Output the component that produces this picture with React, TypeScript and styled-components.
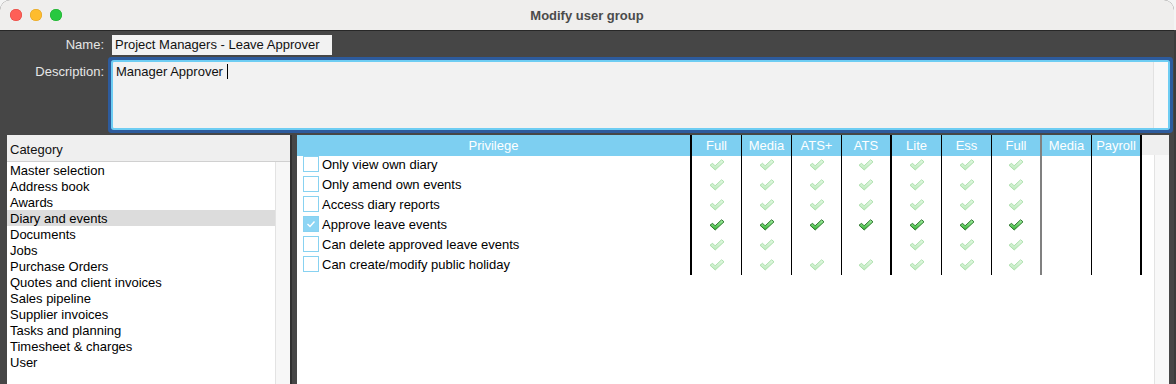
import React from 'react';
import styled, { createGlobalStyle } from 'styled-components';

const GlobalStyle = createGlobalStyle`
  html, body { margin: 0; padding: 0; }
  body {
    width: 1176px;
    height: 384px;
    overflow: hidden;
    background: linear-gradient(#f4f4f4 0 30px, #3c3c3c 30px);
    font-family: "Liberation Sans", Arial, sans-serif;
    font-size: 13px;
  }
`;

const Window = styled.div`
  width: 1174px;
  height: 384px;
  display: flex;
  flex-direction: column;
  border-radius: 10px 10px 0 0;
  overflow: hidden;
  background: #464646;
`;

const TitleBar = styled.div`
  height: 30px;
  flex-shrink: 0;
  background: #efeeed;
  border-bottom: 1px solid #272727;
  display: grid;
  grid-template-columns: 1fr auto 1fr;
  align-items: center;
`;

const Lights = styled.div`
  display: flex;
  gap: 8px;
  padding-left: 10px;
`;

const Light = styled.span<{ $c: string; $b: string }>`
  width: 12px;
  height: 12px;
  border-radius: 50%;
  background: ${(p) => p.$c};
  box-shadow: inset 0 0 0 0.5px ${(p) => p.$b};
`;

const Title = styled.div`
  font-weight: bold;
  font-size: 13px;
  color: #4b4b4b;
`;

const Form = styled.div`
  padding: 4px 0 0 0;
  display: grid;
  grid-template-columns: 104px 1fr;
  column-gap: 8px;
  row-gap: 7px;
`;

const Label = styled.div`
  color: #e6e6e6;
  text-align: right;
  line-height: 20px;
  font-size: 13px;
`;

const NameInput = styled.div`
  width: 217px;
  height: 20px;
  line-height: 20px;
  padding-left: 3px;
  background: #f2f2f2;
  color: #111;
  font-size: 13px;
`;

const TextArea = styled.div`
  margin-left: 1px;
  margin-right: 6px;
  height: 66px;
  background: #f2f2f2;
  border-radius: 1px;
  box-shadow: 0 0 0 2px #6ecdf3, 0 0 0 5px #2d5b9d;
  display: flex;
`;

const TextContent = styled.div`
  flex: 1;
  padding: 2px 3px;
  color: #111;
  line-height: 16px;
  font-size: 13px;
`;

const Caret = styled.span`
  display: inline-block;
  width: 1px;
  height: 15px;
  margin-left: 4px;
  vertical-align: -3px;
  background: #000;
`;

const TextTrack = styled.div`
  width: 14px;
  background: #f8f8f8;
  border-left: 1px solid #e2e2e2;
`;

const Lower = styled.div`
  flex: 1;
  min-height: 0;
  display: flex;
  gap: 5px;
  padding: 7px 5px 0 7px;
`;

const LeftPanel = styled.div`
  width: 285px;
  flex-shrink: 0;
  display: flex;
  flex-direction: column;
  background: #fff;
  border-right: 2px solid #303030;
  box-sizing: border-box;
`;

const CatHeader = styled.div`
  height: 26px;
  line-height: 29px;
  padding-left: 3px;
  background: #efefef;
  border-bottom: 1px solid #d0d0d0;
  color: #111;
  font-size: 13px;
  flex-shrink: 0;
`;

const ListBody = styled.div`
  flex: 1;
  display: flex;
`;

const List = styled.div`
  flex: 1;
  display: flex;
  flex-direction: column;
`;

const ListItem = styled.div<{ $sel?: boolean }>`
  height: 16px;
  line-height: 18px;
  padding-left: 3px;
  color: #000;
  font-size: 13px;
  background: ${(p) => (p.$sel ? '#dcdcdc' : 'transparent')};
`;

const Track = styled.div`
  width: 14px;
  background: #f7f7f7;
  border-left: 1px solid #e3e3e3;
`;

const RightPanel = styled.div`
  flex: 1;
  display: flex;
  flex-direction: column;
  background: #fff;
`;

const HeaderBar = styled.div`
  height: 20px;
  flex-shrink: 0;
  background: #efefef;
  display: flex;
`;

const Grid = styled.div`
  display: grid;
  grid-template-columns: 395px repeat(9, 50px);
  height: 20px;
`;

const HeadCell = styled.div<{ $border: string }>`
  background: #7dcff1;
  color: #fff;
  text-align: center;
  line-height: 21px;
  font-size: 13px;
  border-right: ${(p) => p.$border};
`;

const TableBody = styled.div`
  flex: 1;
  display: flex;
`;

const Rows = styled.div`
  flex: 1;
  display: flex;
  flex-direction: column;
`;

const PrivCell = styled.div`
  display: flex;
  align-items: center;
  padding-left: 6px;
  padding-bottom: 2px;
  box-sizing: border-box;
  border-right: 2px solid #000;
  color: #000;
  font-size: 13px;
`;

const Box = styled.span<{ $on?: boolean }>`
  width: 14px;
  height: 14px;
  margin-right: 3px;
  border: 1px solid #88d2f1;
  background: ${(p) => (p.$on ? '#8dd5f4' : '#fff')};
  display: flex;
  align-items: center;
  justify-content: center;
`;

const DataCell = styled.div<{ $border: string }>`
  display: flex;
  align-items: center;
  justify-content: center;
  padding-bottom: 1px;
  box-sizing: border-box;
  border-right: ${(p) => p.$border};
`;

const PanelTrack = styled.div`
  width: 14px;
  background: #f8f8f8;
  border-left: 1px solid #e3e3e3;
`;

const thin = '1px solid #000';
const thick = '2px solid #000';
const grey = '2px solid #808080';

const columns = [
  { h: 'Full', b: thin },
  { h: 'Media', b: thin },
  { h: 'ATS+', b: thin },
  { h: 'ATS', b: thick },
  { h: 'Lite', b: thin },
  { h: 'Ess', b: thin },
  { h: 'Full', b: grey },
  { h: 'Media', b: thin },
  { h: 'Payroll', b: thick },
];

const all7 = [1, 1, 1, 1, 1, 1, 1, 0, 0];
const rows = [
  { label: 'Only view own diary', marks: all7 },
  { label: 'Only amend own events', marks: all7 },
  { label: 'Access diary reports', marks: all7 },
  { label: 'Approve leave events', marks: all7, on: true },
  { label: 'Can delete approved leave events', marks: [1, 1, 0, 0, 1, 1, 1, 0, 0] },
  { label: 'Can create/modify public holiday', marks: all7 },
];

const categories = [
  'Master selection',
  'Address book',
  'Awards',
  'Diary and events',
  'Documents',
  'Jobs',
  'Purchase Orders',
  'Quotes and client invoices',
  'Sales pipeline',
  'Supplier invoices',
  'Tasks and planning',
  'Timesheet & charges',
  'User',
];

const Tick: React.FC<{ strong?: boolean; id: string }> = ({ strong, id }) => (
  <svg width="16" height="12" viewBox="0 0 16 12">
    <defs>
      <linearGradient id={id} x1="0" y1="0" x2="0" y2="1">
        <stop offset="0" stopColor={strong ? '#a6f2a6' : '#e4f8e4'} />
        <stop offset="1" stopColor={strong ? '#33ad33' : '#bde9bd'} />
      </linearGradient>
    </defs>
    <path
      d="M1 6.2 L3.6 4.3 L6.1 6.8 L12.6 0.8 L15 2.8 L6.2 11 Z"
      fill={`url(#${id})`}
      stroke={strong ? '#2a752a' : '#ade0ad'}
      strokeWidth="1"
      strokeLinejoin="round"
    />
  </svg>
);

const BoxTick = () => (
  <svg width="10" height="8" viewBox="0 0 10 8">
    <path d="M1.5 4 L4 6.5 L8.5 1.5" fill="none" stroke="#fff" strokeWidth="1.4" />
  </svg>
);

export default function App() {
  return (
    <>
      <GlobalStyle />
      <Window>
        <TitleBar>
          <Lights>
            <Light $c="#fe5f57" $b="#e0443e" />
            <Light $c="#febc2e" $b="#dea123" />
            <Light $c="#28c840" $b="#1aab29" />
          </Lights>
          <Title>Modify user group</Title>
          <div />
        </TitleBar>
        <Form>
          <Label>Name:</Label>
          <NameInput>Project Managers - Leave Approver</NameInput>
          <Label>Description:</Label>
          <TextArea>
            <TextContent>
              Manager Approver
              <Caret />
            </TextContent>
            <TextTrack />
          </TextArea>
        </Form>
        <Lower>
          <LeftPanel>
            <CatHeader>Category</CatHeader>
            <ListBody>
              <List>
                {categories.map((c, i) => (
                  <ListItem key={c} $sel={i === 3}>
                    {c}
                  </ListItem>
                ))}
              </List>
              <Track />
            </ListBody>
          </LeftPanel>
          <RightPanel>
            <HeaderBar>
              <Grid>
                <HeadCell $border={thick}>Privilege</HeadCell>
                {columns.map((c, i) => (
                  <HeadCell key={i} $border={c.b}>
                    {c.h}
                  </HeadCell>
                ))}
              </Grid>
            </HeaderBar>
            <TableBody>
              <Rows>
                {rows.map((r, ri) => (
                  <Grid key={ri}>
                    <PrivCell>
                      <Box $on={r.on}>{r.on && <BoxTick />}</Box>
                      {r.label}
                    </PrivCell>
                    {columns.map((c, ci) => (
                      <DataCell key={ci} $border={c.b}>
                        {r.marks[ci] ? <Tick strong={r.on} id={`t${ri}-${ci}`} /> : null}
                      </DataCell>
                    ))}
                  </Grid>
                ))}
              </Rows>
              <PanelTrack />
            </TableBody>
          </RightPanel>
        </Lower>
      </Window>
    </>
  );
}
